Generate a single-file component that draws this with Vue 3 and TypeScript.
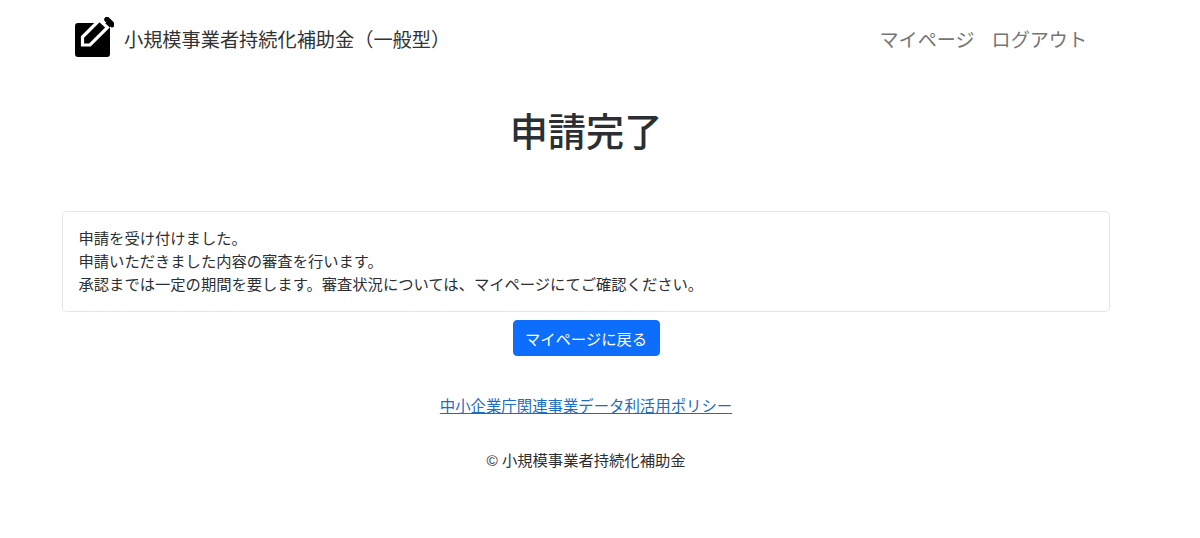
<template>
  <div class="page">
    <header class="navbar">
      <a class="brand" href="#">
        <svg class="logo" viewBox="0 0 40 41" aria-hidden="true">
          <rect x="1" y="6" width="35" height="34" rx="3" fill="#000" />
          <path d="M33 2.500 38 7.500" fill="none" stroke="#000" stroke-width="5.500" stroke-linecap="round" />
          <path d="M8.500 20 25.500 3 33.500 10.500 16 28H8.500z" fill="#000" stroke="#fff" stroke-width="3.200" stroke-linejoin="miter" />
        </svg>
        <span>小規模事業者持続化補助金（一般型）</span>
      </a>
      <nav class="nav-links">
        <a href="#">マイページ</a>
        <a href="#">ログアウト</a>
      </nav>
    </header>

    <main class="container">
      <h1>{{ title }}</h1>
      <section class="card">
        <p v-for="line in lines" :key="line">{{ line }}</p>
      </section>
      <div class="actions">
        <button type="button" class="btn">マイページに戻る</button>
      </div>
    </main>

    <footer class="footer">
      <a href="#" class="policy">中小企業庁関連事業データ利活用ポリシー</a>
      <p>© 小規模事業者持続化補助金</p>
    </footer>
  </div>
</template>

<script setup lang="ts">
const title = '申請完了'

const lines: string[] = [
  '申請を受け付けました。',
  '申請いただきました内容の審査を行います。',
  '承認までは一定の期間を要します。審査状況については、マイページにてご確認ください。',
]
</script>

<style>
body {
  background: #fff;
}
</style>

<style scoped>
.page {
  height: 538px;
  overflow: hidden;
  font-family: "Liberation Sans", "Noto Sans CJK JP", sans-serif;
  font-size: 15.3px;
  line-height: 23px;
  color: #2b2f33;
}

.navbar {
  display: flex;
  justify-content: space-between;
  align-items: center;
  height: 78px;
  padding: 2px 113px 0 74px;
  box-sizing: border-box;
}

.brand {
  display: flex;
  align-items: center;
  gap: 10px;
  font-size: 19.200px;
  color: #333;
  text-decoration: none;
}

.logo {
  display: block;
  width: 40px;
  height: 41px;
  margin-top: -5px;
}

.nav-links {
  display: flex;
  gap: 17px;
}

.nav-links a {
  font-size: 19.100px;
  color: #757575;
  text-decoration: none;
}

.container {
  padding: 0 90px 0 62px;
}

h1 {
  margin: 32px 0 55px;
  font-size: 38.200px;
  font-weight: 500;
  line-height: 46px;
  text-align: center;
}

.card {
  padding: 15px 15.500px;
  background: #fff;
  border: 1px solid rgba(0, 0, 0, 0.1);
  border-radius: 5px;
}

.card p {
  margin: 0;
}

.actions {
  display: flex;
  justify-content: center;
  margin-top: 8px;
}

.btn {
  width: 147px;
  height: 36px;
  padding: 0;
  font-family: inherit;
  font-size: 15.3px;
  color: #fff;
  background: #0d6efd;
  border: 1px solid #0d6efd;
  border-radius: 4px;
}

.footer {
  display: flex;
  flex-direction: column;
  align-items: center;
  padding-right: 28px;
  margin-top: 39px;
}

.policy {
  font-size: 15.400px;
  color: #1a6cc4;
}

.footer p {
  margin: 31px 0 0;
}
</style>
